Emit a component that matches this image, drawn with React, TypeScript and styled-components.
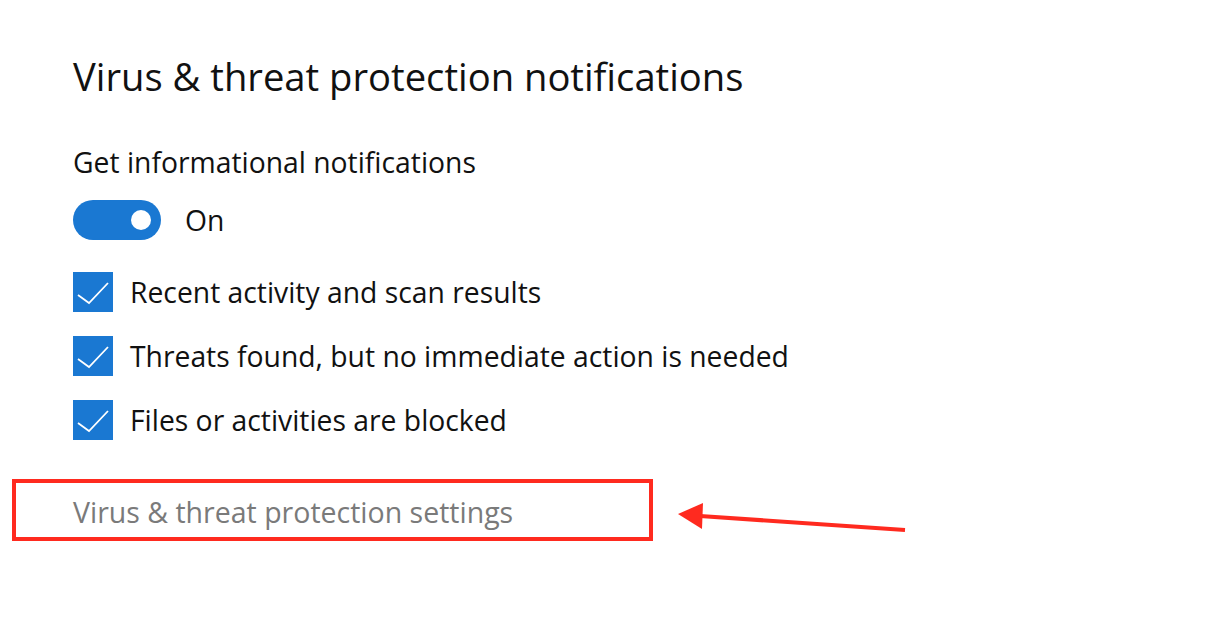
import React from "react";
import styled, { createGlobalStyle } from "styled-components";

const Global = createGlobalStyle`
  html, body { margin: 0; padding: 0; background: #ffffff; }
  body { font-family: "Open Sans", "Noto Sans", sans-serif; }
`;

const Page = styled.div`
  width: 1232px;
  height: 628px;
  box-sizing: border-box;
  padding: 50px 0 0 12px;
  display: flex;
  flex-direction: column;
  position: relative;
  overflow: hidden;
`;

const Content = styled.div`
  padding-left: 61px;
  display: flex;
  flex-direction: column;
`;

const Title = styled.h1`
  margin: 0;
  font-weight: 400;
  font-size: 38.2px;
  line-height: 52px;
  color: #111;
`;

const Label = styled.div`
  margin-top: 40px;
  font-size: 28.3px;
  line-height: 40px;
  color: #111;
`;

const ToggleRow = styled.div`
  margin-top: 18px;
  display: flex;
  align-items: center;
  gap: 24px;
`;

const Track = styled.div<{ $on: boolean }>`
  width: 88px;
  height: 40px;
  border-radius: 20px;
  background: ${(p) => (p.$on ? "#1a78d2" : "#ccc")};
  position: relative;
  flex-shrink: 0;
`;

const Knob = styled.div`
  position: absolute;
  top: 10px;
  right: 10px;
  width: 20px;
  height: 20px;
  border-radius: 50%;
  background: #fff;
`;

const Text = styled.span`
  font-size: 28.3px;
  line-height: 40px;
  color: #111;
`;

const CheckList = styled.div`
  margin-top: 32px;
  display: flex;
  flex-direction: column;
  gap: 24px;
`;

const CheckRow = styled.div`
  display: flex;
  align-items: center;
  gap: 17px;
`;

const Box = styled.div`
  width: 40px;
  height: 40px;
  background: #1a78d2;
  flex-shrink: 0;
  display: flex;
  align-items: center;
  justify-content: center;
`;

const LinkBox = styled.div`
  margin-top: 39px;
  width: 641px;
  height: 62px;
  box-sizing: border-box;
  border: 4px solid #ff2a1f;
  display: flex;
  align-items: center;
  padding: 4px 0 0 57px;
`;

const LinkText = styled.span`
  font-size: 28.5px;
  color: #7a7a7a;
  line-height: 40px;
`;

const Arrow = styled.svg`
  position: absolute;
  left: 670px;
  top: 495px;
`;

const Check = () => (
  <svg width="40" height="40" viewBox="0 0 40 40">
    <polyline points="5,23 16,31 35,11" fill="none" stroke="#fff" strokeWidth="1.8" />
  </svg>
);

const items = [
  "Recent activity and scan results",
  "Threats found, but no immediate action is needed",
  "Files or activities are blocked",
];

export default function App() {
  return (
    <>
      <Global />
      <Page>
        <Content>
          <Title>Virus &amp; threat protection notifications</Title>
          <Label>Get informational notifications</Label>
          <ToggleRow>
            <Track $on>
              <Knob />
            </Track>
            <Text>On</Text>
          </ToggleRow>
          <CheckList>
            {items.map((t) => (
              <CheckRow key={t}>
                <Box>
                  <Check />
                </Box>
                <Text>{t}</Text>
              </CheckRow>
            ))}
          </CheckList>
        </Content>
        <LinkBox>
          <LinkText>Virus &amp; threat protection settings</LinkText>
        </LinkBox>
        <Arrow width="250" height="50" viewBox="670 495 250 50">
          <line x1="700" y1="516" x2="905" y2="530" stroke="#ff2a1f" strokeWidth="4" />
          <polygon points="678,514 703,503 702,529" fill="#ff2a1f" />
        </Arrow>
      </Page>
    </>
  );
}
